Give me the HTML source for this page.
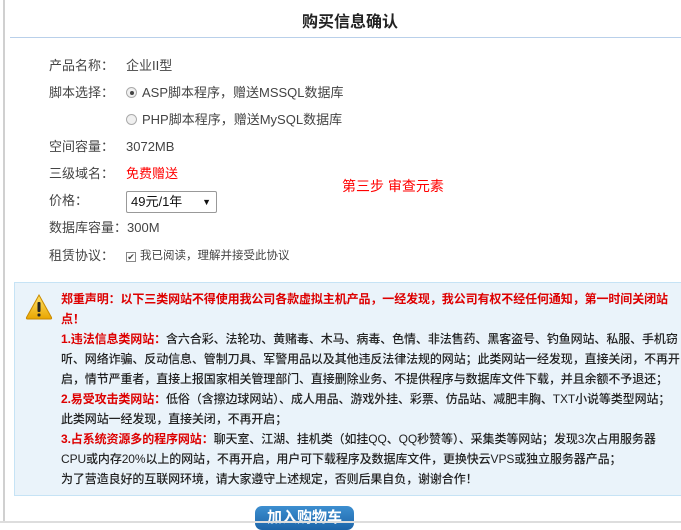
<!DOCTYPE html>
<html><head><meta charset="utf-8"><style>
*{margin:0;padding:0;box-sizing:border-box}
body{width:681px;height:523px;overflow:hidden;background:#fff;font-family:"Liberation Sans","Noto Sans CJK SC",sans-serif;color:#333;position:relative}
.lb{position:absolute;left:3px;top:0;width:2px;height:523px;background:#d0d0d0}
.title{position:absolute;left:0;width:700px;top:8px;text-align:center;font-size:16px;font-weight:bold;color:#222}
.hl{position:absolute;left:10px;right:0;top:37px;height:1px;background:#b9d0ea}
.row{position:absolute;left:49px;font-size:13px;color:#444;white-space:nowrap;line-height:18px}
.v{position:absolute;left:126px;font-size:13px;color:#444;white-space:nowrap;line-height:18px}
.radio{display:inline-block;width:11px;height:11px;border:1px solid #aaa;border-radius:50%;background:#f0f0f0;vertical-align:-1px;margin-right:5px;position:relative}
.radio.on::after{content:"";position:absolute;left:2.5px;top:2.5px;width:4px;height:4px;border-radius:50%;background:#444}
.sel{position:absolute;left:126px;top:191px;width:91px;height:22px;border:1px solid #999;border-radius:2px;font-size:13px;line-height:20px;padding-left:4px;color:#111}
.sel span{position:absolute;right:5px;top:0;font-size:9px}
.red{color:#f00}
.box{position:absolute;left:14px;top:282px;width:680px;height:214px;background:#eaf3fa;border:1px solid #c6e3f5}
.bt{position:absolute;left:46px;top:6px;font-size:12px;line-height:20px;color:#222;white-space:nowrap;letter-spacing:-0.1px;font-weight:500}
.bt b{color:#d00}
.btn{position:absolute;left:255px;top:506px;width:99px;height:24px;border-radius:7px;background:linear-gradient(#3d8fd0,#1c64a8);color:#fff;font-size:15px;font-weight:bold;text-align:center;line-height:24px}
.bot{position:absolute;left:0;top:521px;width:681px;height:2px;background:#ddd}
</style></head><body>
<div class="lb"></div>
<div class="title">购买信息确认</div>
<div class="hl"></div>
<div class="row" style="top:57px">产品名称：</div><div class="v" style="top:57px">企业II型</div>
<div class="row" style="top:84px">脚本选择：</div><div class="v" style="top:84px"><span class="radio on"></span>ASP脚本程序，赠送MSSQL数据库</div>
<div class="v" style="top:111px"><span class="radio"></span>PHP脚本程序，赠送MySQL数据库</div>
<div class="row" style="top:138px">空间容量：</div><div class="v" style="top:138px">3072MB</div>
<div class="row" style="top:165px">三级域名：</div><div class="v red" style="top:165px">免费赠送</div>
<div class="row red" style="left:342px;top:177px;font-size:14px">第三步 审查元素</div>
<div class="row" style="top:192px">价格：</div>
<div class="sel">49元/1年<span>▼</span></div>
<div class="row" style="top:219px">数据库容量：300M</div>
<div class="row" style="top:247px">租赁协议：</div><div class="v" style="top:247px;font-size:11.5px"><span style="display:inline-block;width:10px;height:10px;border:1px solid #888;font-size:9px;line-height:9px;text-align:center;margin-right:4px;vertical-align:-1px">✔</span>我已阅读，理解并接受此协议</div>
<div class="box">
<svg style="position:absolute;left:10px;top:10px" width="28" height="28" viewBox="0 0 28 28"><defs><linearGradient id="g" x1="0" y1="0" x2="0" y2="1"><stop offset="0" stop-color="#ffe36a"/><stop offset="1" stop-color="#e9a500"/></linearGradient></defs><path d="M14 2 L26.5 24.5 Q27 26 25.5 26 L2.5 26 Q1 26 1.5 24.5 Z" fill="url(#g)" stroke="#c98a00" stroke-width="1"/><rect x="12.5" y="9" width="3" height="10" rx="1" fill="#222"/><rect x="12.5" y="20.5" width="3" height="3" rx="1" fill="#222"/></svg>
<div class="bt"><b>郑重声明：以下三类网站不得使用我公司各款虚拟主机产品，一经发现，我公司有权不经任何通知，第一时间关闭站</b><br><b>点！</b><br><b>1.违法信息类网站：</b>含六合彩、法轮功、黄赌毒、木马、病毒、色情、非法售药、黑客盗号、钓鱼网站、私服、手机窃<br>听、网络诈骗、反动信息、管制刀具、军警用品以及其他违反法律法规的网站；此类网站一经发现，直接关闭，不再开<br>启，情节严重者，直接上报国家相关管理部门、直接删除业务、不提供程序与数据库文件下载，并且余额不予退还；<br><b>2.易受攻击类网站：</b>低俗（含擦边球网站）、成人用品、游戏外挂、彩票、仿品站、减肥丰胸、TXT小说等类型网站；<br>此类网站一经发现，直接关闭，不再开启；<br><b>3.占系统资源多的程序网站：</b>聊天室、江湖、挂机类（如挂QQ、QQ秒赞等）、采集类等网站；发现3次占用服务器<br>CPU或内存20%以上的网站，不再开启，用户可下载程序及数据库文件，更换快云VPS或独立服务器产品；<br>为了营造良好的互联网环境，请大家遵守上述规定，否则后果自负，谢谢合作！</div>
</div>
<div class="btn">加入购物车</div>
<div class="bot"></div>
</body></html>
